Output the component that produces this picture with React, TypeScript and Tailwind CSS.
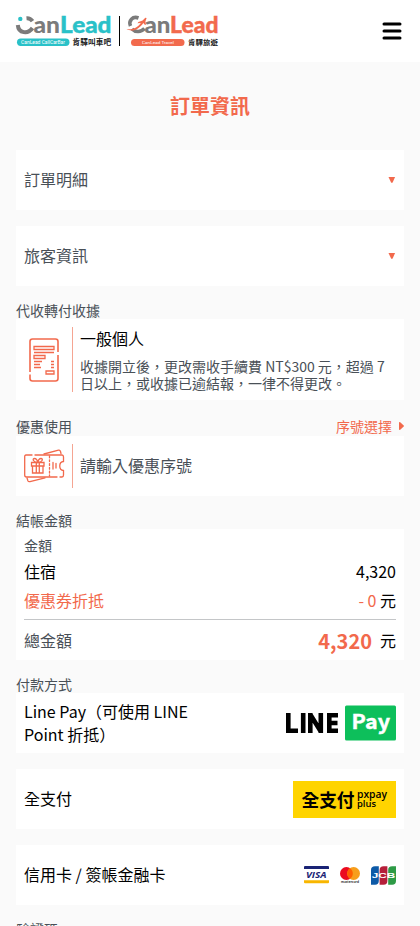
import React from "react";

const CJK = "font-['Noto_Sans_CJK_TC',sans-serif]";

export default function App() {
  return (
    <div className={`h-[926px] overflow-hidden bg-[#fafafa] text-base leading-[23px] text-black ${CJK}`}>
      <Header />
      <main className="px-4">
        <h1 className="mt-[29px] text-center text-xl leading-[29px] font-bold text-[#f2694c]">訂單資訊</h1>

        <div className="mt-[30px] flex flex-col gap-4">
          <Accordion title="訂單明細" />
          <Accordion title="旅客資訊" />

          <Section label="代收轉付收據">
            <div className="flex bg-white p-2">
              <div className="flex w-[49px] shrink-0 items-center border-r border-[#f5a592] pl-1">
                <ReceiptIcon />
              </div>
              <div className="pl-[7px]">
                <div>一般個人</div>
                <p className="mt-2 text-sm leading-[17px] text-[#495057]">
                  收據開立後，更改需收手續費 NT$300 元，超過 7 日以上，或收據已逾結報，一律不得更改。
                </p>
              </div>
            </div>
          </Section>

          <Section
            label="優惠使用"
            action={
              <button className="flex h-5 items-center gap-[7px] text-[#f2694c]">
                序號選擇
                <svg width="5" height="8" viewBox="0 0 5 8" fill="#f2694c">
                  <path d="M0 .8C0 .1.7-.2 1.2.3L4.7 3.4c.4.3.4.9 0 1.200L1.200 7.700C.7 8.200 0 7.900 0 7.200Z" />
                </svg>
              </button>
            }
          >
            <div className="flex h-[60px] bg-white p-2">
              <div className="flex w-[49px] shrink-0 items-center border-r border-[#f5a592]">
                <CouponIcon />
              </div>
              <div className="flex items-center pb-px pl-[7px] text-[#495057]">請輸入優惠序號</div>
            </div>
          </Section>

          <Section label="結帳金額">
            <div className="h-[131px] bg-white p-2">
              <div className="text-sm leading-[17px] text-[#495057]">金額</div>
              <div className="mt-[6px] flex justify-between">
                <span>住宿</span>
                <span>4,320</span>
              </div>
              <div className="mt-[6px] flex justify-between border-b border-[#c4c6c8] pb-[7px] text-[#f2694c]">
                <span>優惠券折抵</span>
                <span>
                  - 0 <span className="text-black">元</span>
                </span>
              </div>
              <div className="mt-[6px] flex items-center justify-between leading-[29px]">
                <span className="text-[#495057]">總金額</span>
                <span className="flex items-center gap-2">
                  <b className="text-xl leading-[29px] font-bold text-[#f2694c]">4,320</b>元
                </span>
              </div>
            </div>
          </Section>

          <Section label="付款方式">
            <div className="flex flex-col gap-4">
              <Payment title="Line Pay（可使用 LINE Point 折抵）" className="w-[186px]" logo={<LinePayLogo />} />
              <Payment title="全支付" className="pb-px" logo={<PxPayLogo />} />
              <Payment title="信用卡 / 簽帳金融卡" className="pb-px" logo={<CardLogos />} />
            </div>
          </Section>

          <Section label="驗證碼">
            <div className="h-[60px] bg-white" />
          </Section>
        </div>
      </main>
    </div>
  );
}

// Layout pieces
const Header = () => {
  return (
    <header className="flex h-[62px] items-center justify-between bg-white px-4">
      <div className="flex items-center">
        <CallCarLogo />
        <div className="ml-[7px] h-[30px] w-px bg-black" />
        <TravelLogo />
      </div>
      <button aria-label="menu" className="mr-[2px]">
        <svg width="20" height="20" viewBox="0 0 20 20" stroke="#000" strokeWidth="3" strokeLinecap="round">
          <path d="M2 3h16M2 10h16M2 17h16" />
        </svg>
      </button>
    </header>
  );
};

const Accordion = ({ title }: { title: string }) => {
  return (
    <div className="flex h-[60px] items-center justify-between bg-white px-2 text-[#495057]">
      <span className="pb-px">{title}</span>
      <svg width="8" height="8" viewBox="0 0 8 8" fill="#f2694c">
        <path d="M.5 1h6.600L4.500 6.800H3.200Z" />
      </svg>
    </div>
  );
};

const Section = ({ label, action, children }: { label: string; action?: React.ReactNode; children: React.ReactNode }) => {
  return (
    <section>
      <div className="flex items-center justify-between text-sm leading-[17px] text-[#495057]">
        <span>{label}</span>
        {action}
      </div>
      {children}
    </section>
  );
};

const Payment = ({ title, className, logo }: { title: string; className: string; logo: React.ReactNode }) => {
  return (
    <div className="flex h-[60px] items-center justify-between bg-white px-2">
      <div className={className}>{title}</div>
      {logo}
    </div>
  );
};

// Brand logos
const CallCarLogo = () => {
  return (
    <svg className="overflow-visible" width="96" height="32" viewBox="0 0 96 32">
      <circle cx="4.300" cy="3.900" r="2.200" fill="#29c1c8" />
      <g fill="none" stroke="#7b7b7b" strokeWidth="4">
        <path d="M1.800 10C2.500 18.500 12 19.500 16.500 13" />
        <path d="M10.500 3.200C13 3 15 4 16.500 6.200" />
      </g>
      <g fontFamily="Lato" fontWeight="900" fontSize="23">
        <text x="17.500" y="17.700" fill="#7b7b7b" textLength="26.500" lengthAdjust="spacingAndGlyphs">an</text>
        <text x="44" y="17.700" fill="#29c1c8" stroke="#29c1c8" strokeWidth=".4" textLength="51.500" lengthAdjust="spacingAndGlyphs">Lead</text>
      </g>
      <rect x="1" y="23.500" width="52.500" height="7.500" rx="3.700" fill="#29c1c8" />
      <text x="5" y="29" fill="#fff" fontFamily="Roboto" fontSize="4.500" textLength="44" lengthAdjust="spacingAndGlyphs">CanLead CallCarBar</text>
      <text x="56.500" y="29.700" fill="#222" fontFamily="'Noto Sans CJK TC'" fontWeight="700" fontSize="7.600" textLength="38.500">肯驛叫車吧</text>
    </svg>
  );
};

const TravelLogo = () => {
  return (
    <svg className="ml-[7px] overflow-visible" width="92" height="32" viewBox="0 0 92 32">
      <path d="M11.500 3C5.500.8 1.300 6 3.500 11M5 14c3.500 3.600 9 3.300 12.500-.5" fill="none" stroke="#7b7b7b" strokeWidth="3.600" />
      <path d="M-.5 14C5.500 15.500 11 12 13.800 8l-3.300.2.9-1.200 4.200-1.400L18.300 2.700l1.300.4-1.200 3.400.6 3-1 .6-1.700-2.200C13 13 6 18 -.5 14Z" fill="#f26a4d" />
      <g fontFamily="Lato" fontWeight="900" fontSize="22.500">
        <text x="17.500" y="18.300" fill="#7b7b7b" textLength="26" lengthAdjust="spacingAndGlyphs">an</text>
        <text x="43" y="18.300" fill="#f26a4d" stroke="#f26a4d" strokeWidth=".4" textLength="48.500" lengthAdjust="spacingAndGlyphs">Lead</text>
      </g>
      <rect x="4" y="24" width="53.500" height="7" rx="3.500" fill="#f26a4d" />
      <text x="15" y="29.100" fill="#fff" fontFamily="Roboto" fontSize="4.300" textLength="32" lengthAdjust="spacingAndGlyphs">CanLead Travel</text>
      <text x="61" y="30.200" fill="#222" fontFamily="'Noto Sans CJK TC'" fontWeight="700" fontSize="7.400" textLength="30">肯驛旅遊</text>
    </svg>
  );
};

const LinePayLogo = () => {
  return (
    <svg width="110" height="36" viewBox="0 0 110 36">
      <g fill="none" stroke="#000" strokeWidth="4.600">
        <path d="M2.300 8v17.700H12M17.200 8v20M24.300 28V8M24.300 9.500l10.500 17M34.800 28V8M52 10.300H43.300v15.400H52M43.300 18H51.500" />
      </g>
      <rect x="59" y=".5" width="51" height="35" rx="1.500" fill="#0dbf5b" />
      <text x="65.500" y="23.700" fill="#fff" stroke="#fff" strokeWidth=".4" fontFamily="'Noto Sans CJK TC'" fontWeight="700" fontSize="20" textLength="38.500" lengthAdjust="spacingAndGlyphs">Pay</text>
    </svg>
  );
};

const PxPayLogo = () => {
  return (
    <svg width="103" height="37" viewBox="0 0 103 37">
      <rect width="103" height="37" fill="#ffd400" />
      <text x="8.500" y="25.500" fontFamily="'Noto Sans CJK TC'" fontWeight="700" fontSize="18.500" textLength="53" lengthAdjust="spacingAndGlyphs">全支付</text>
      <g fontFamily="Open Sans" fontWeight="600">
        <text x="64" y="16.800" fontSize="10" textLength="30" lengthAdjust="spacingAndGlyphs">pxpay</text>
        <text x="64" y="25.500" fontSize="9.500" textLength="19" lengthAdjust="spacingAndGlyphs">plus</text>
      </g>
    </svg>
  );
};

const CardLogos = () => {
  return (
    <div className="flex items-center gap-[11px]">
      <svg width="25" height="18" viewBox="0 0 25 18">
        <path d="M0 3V1Q0 0 1 0H24Q25 0 25 1V3Z" fill="#1a2375" />
        <path d="M0 14.200H25V16.200Q25 17.200 24 17.200H1Q0 17.200 0 16.200Z" fill="#f8b600" />
        <text x="2" y="12" fill="#1a2375" fontFamily="Open Sans" fontWeight="700" fontStyle="italic" fontSize="9.500" textLength="20.500" lengthAdjust="spacingAndGlyphs">VISA</text>
      </svg>
      <svg width="20" height="18" viewBox=".6 0 20 18">
        <circle cx="7" cy="7.500" r="6.400" fill="#eb0a20" />
        <circle cx="14.200" cy="7.500" r="6.400" fill="#f79e1b" />
        <path d="M10.600 2.200a6.400 6.400 0 0 1 0 10.600a6.400 6.400 0 0 1 0-10.600" fill="#ff5f00" />
        <text x="1.500" y="16.700" fill="#222" fontFamily="Lato" fontWeight="700" fontSize="3.500" textLength="18">mastercard</text>
      </svg>
      <svg width="25" height="19" viewBox="0 0 25 19">
        <path d="M4 .3H7.800V15Q7.800 18.700 4 18.700H0V4Q0 .3 4 .3Z" fill="#0d5aa7" />
        <path d="M12.600 .3H16.400V15Q16.400 18.700 12.600 18.700H8.600V4Q8.600 .3 12.600 .3Z" fill="#b51f3a" />
        <path d="M21.200 .3H25V15Q25 18.700 21.200 18.700H17.200V4Q17.200 .3 21.200 .3Z" fill="#2e9b46" />
        <text x=".8" y="12" fill="#fff" fontFamily="Liberation Sans" fontWeight="700" fontSize="7" textLength="23.500" lengthAdjust="spacingAndGlyphs">JCB</text>
      </svg>
    </div>
  );
};

// Outline icons
const ReceiptIcon = () => {
  return (
    <svg className="ml-[1px]" width="30" height="44" viewBox="0 0 30 44" fill="none" stroke="#f2694c" strokeWidth="1.600">
      <path d="M1 34V3.500Q1 1 3.500 1H26.500Q29 1 29 3.500V14M29 17V40.500Q29 43 26.500 43H3.500Q1 43 1 40.500V36.500" />
      <path d="M5 8.500H25V11.500H5ZM5 14.500H25M5 17.500H16V20.500H5ZM17 36V33H25V36Z" strokeWidth="1.300" />
      <path d="M5 23.500H13M5 26.500H11M5 29.500H12M22 23.500H25M22 26.500H25M22 29.500H25" strokeWidth="1.300" />
    </svg>
  );
};

const CouponIcon = () => {
  return (
    <svg width="41" height="34" viewBox="0 0 41 34" fill="none" stroke="#f2694c" strokeWidth="1.300" strokeLinecap="round">
      <path d="M8 6H2Q.7 6 .7 7.500V26Q.7 28 2.500 28H33M11 6H38Q39.500 6 39.500 8V12.500C34.500 13 34.500 21 39.500 21.500V26Q39.500 28 38 28H36" />
      <path d="M20 5 34.500 1.200Q36 .8 36.500 2.500L37 4.500M3 29 4 32Q4.500 33 6 32.600L21 28.800" />
      <path d="M25.500 7V27" strokeDasharray="1.800 2" />
      <path d="M29 13.500V20M32 14.500V19" />
      <path d="M7.500 13.500H20V17H7.500ZM8.500 17V24H19V17M12.300 13.500V24M15.300 13.500V24" />
      <path d="M13.800 13.500C9 13.500 8 9.500 10.500 9.500Q13 9.500 13.800 13.500Q14.500 9.500 17 9.500C19.500 9.500 18.500 13.500 13.800 13.500" />
    </svg>
  );
};
